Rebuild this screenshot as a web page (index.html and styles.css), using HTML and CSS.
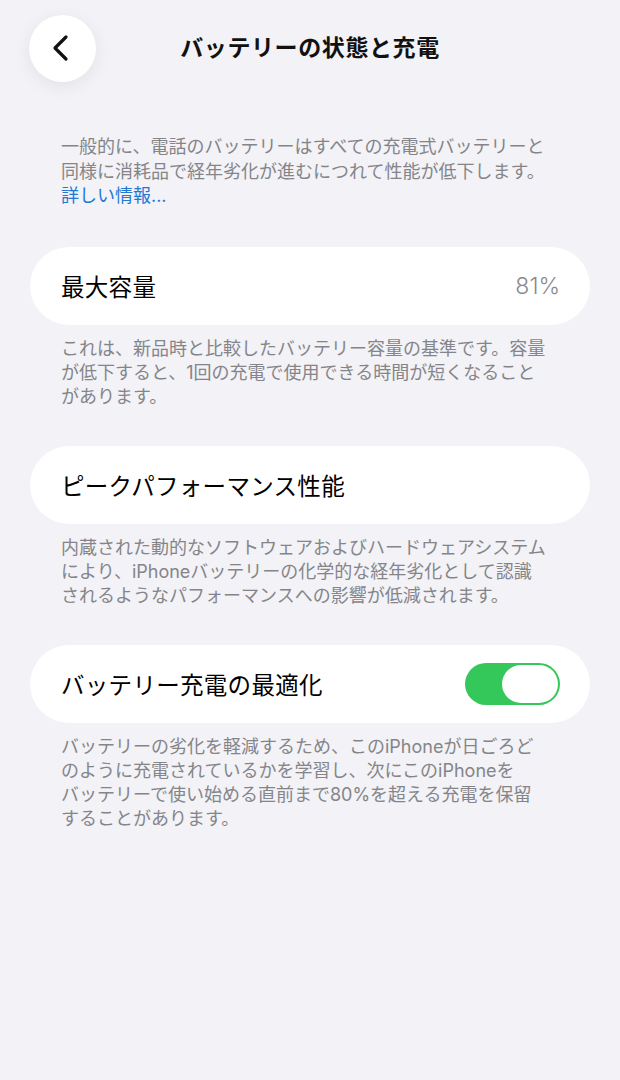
FILE: index.html
```html
<!DOCTYPE html>
<html lang="ja">
<head>
<meta charset="utf-8">
<link rel="stylesheet" href="styles.css">
</head>
<body>
<div class="screen">
  <header class="nav">
    <div class="nav-left">
      <button class="back" aria-label="戻る">
        <svg width="24" height="28" viewBox="0 0 24 28"><path d="M17 3 L6 14 L17 25" fill="none" stroke="#111" stroke-width="3.2" stroke-linecap="round" stroke-linejoin="round"/></svg>
      </button>
    </div>
    <h1 class="title">バッテリーの状態と充電</h1>
    <div></div>
  </header>

  <p class="intro">一般的に、電話のバッテリーはすべての充電式バッテリーと<br>同様に消耗品で経年劣化が進むにつれて性能が低下します。<br><a class="link">詳しい情報...</a></p>

  <section class="group">
    <div class="card">
      <span class="label">最大容量</span>
      <span class="value">81%</span>
    </div>
    <p class="note">これは、新品時と比較したバッテリー容量の基準です。容量<br>が低下すると、1回の充電で使用できる時間が短くなること<br>があります。</p>
  </section>

  <section class="group">
    <div class="card">
      <span class="label">ピークパフォーマンス性能</span>
    </div>
    <p class="note">内蔵された動的なソフトウェアおよびハードウェアシステム<br>により、iPhoneバッテリーの化学的な経年劣化として認識<br>されるようなパフォーマンスへの影響が低減されます。</p>
  </section>

  <section class="group">
    <div class="card">
      <span class="label">バッテリー充電の最適化</span>
      <span class="toggle"><span class="knob"></span></span>
    </div>
    <p class="note">バッテリーの劣化を軽減するため、このiPhoneが日ごろど<br>のように充電されているかを学習し、次にこのiPhoneを<br>バッテリーで使い始める直前まで80%を超える充電を保留<br>することがあります。</p>
  </section>
</div>
</body>
</html>
```

FILE: styles.css
```css
* { box-sizing: border-box; }
html, body {
  margin: 0;
  padding: 0;
  background: #f2f2f7;
}
body {
  font-family: "Inter", "Noto Sans CJK JP", sans-serif;
  color: #000;
}
.screen {
  width: 620px;
  min-height: 1080px;
  background: #f2f2f7;
}
.nav {
  display: grid;
  grid-template-columns: 1fr auto 1fr;
  align-items: center;
  height: 96px;
}
.nav-left {
  padding-left: 29px;
  display: flex;
  align-items: center;
}
.back {
  width: 67px;
  height: 67px;
  border-radius: 50%;
  border: none;
  background: #fff;
  box-shadow: 0 4px 18px rgba(0,0,0,0.07);
  display: flex;
  align-items: center;
  justify-content: center;
  padding: 0 4px 0 0;
}
.title {
  margin: 0;
  font-size: 23px;
  font-weight: 700;
  letter-spacing: 0.6px;
  line-height: 1;
  color: #111;
}
.intro {
  margin: 39px 0 0;
  padding: 0 30px 0 61px;
  font-size: 18px;
  line-height: 24.5px;
  color: #858589;
}
.link {
  color: #2478d4;
}
.group {
  margin-top: 38px;
}
.group + .group {
  margin-top: 37px;
}
.card {
  margin: 0 30px;
  height: 78px;
  border-radius: 39px;
  background: #fff;
  display: flex;
  align-items: center;
  justify-content: space-between;
  padding: 0 30px 0 31px;
}
.label {
  font-size: 23.5px;
  font-weight: 400;
  letter-spacing: 0.3px;
  color: #000;
}
.value {
  font-size: 23px;
  font-weight: 300;
  color: #8a8a8e;
}
.toggle {
  width: 95px;
  height: 42px;
  border-radius: 21px;
  background: #34c759;
  display: flex;
  align-items: center;
  justify-content: flex-end;
  padding: 0 2px;
}
.knob {
  width: 56px;
  height: 38px;
  border-radius: 19px;
  background: #fff;
}
.note {
  margin: 12px 0 0;
  padding: 0 30px 0 61px;
  font-size: 18px;
  line-height: 24px;
  color: #858589;
}
```
